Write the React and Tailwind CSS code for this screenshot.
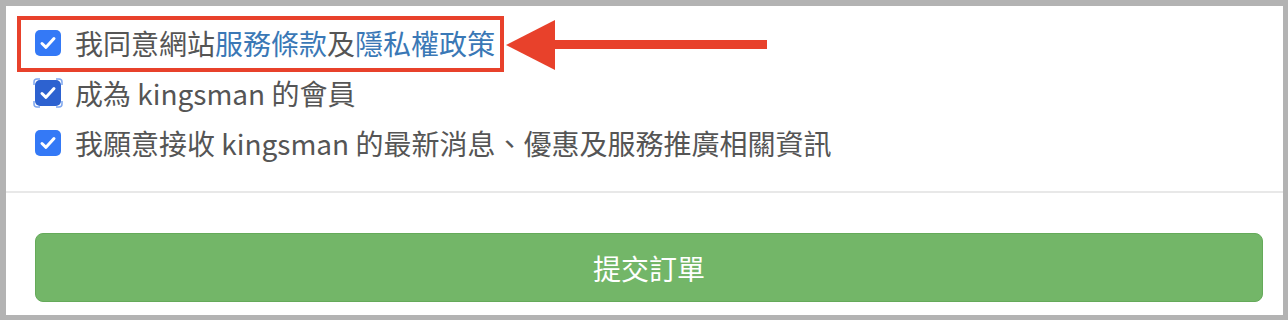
import React from 'react';

const font = { fontFamily: '"Noto Sans CJK TC", "Noto Sans", sans-serif' };

function Check({ focused }) {
    return (
        <span className={`relative flex items-center justify-center w-[26px] h-[26px] rounded-[5px] shrink-0 ${focused ? 'bg-[#2d62d0]' : 'bg-[#3479f6]'}`}>
            {focused && (
                <svg className="absolute -left-[2px] -top-[2px]" width="30" height="30" viewBox="0 0 30 30" fill="none">
                    <path d="M1 7 V4 Q1 1 4 1 H7 M23 1 H26 Q29 1 29 4 V7 M29 23 V26 Q29 29 26 29 H23 M7 29 H4 Q1 29 1 26 V23" stroke="#7ea6ee" strokeWidth="1.5" />
                </svg>
            )}
            <svg width="20" height="20" viewBox="0 0 20 20" fill="none">
                <path d="M4 10.5 L8 14.3 L16 5.5" stroke="white" strokeWidth="3" strokeLinecap="round" strokeLinejoin="round" />
            </svg>
        </span>
    );
}

function Row({ children, focused }) {
    return (
        <div className="h-[50px] flex items-center gap-[14px]">
            <Check focused={focused} />
            <span className="text-[28px] leading-none text-[#555555]">{children}</span>
        </div>
    );
}

export default function App() {
    return (
        <div className="relative w-[1288px] h-[320px] bg-[#b3b3b3] pt-[6px] pl-[6px] pr-[5px] pb-[5px]" style={font}>
            <div className="h-full bg-white flex flex-col">
                <div className="pt-[12px] pb-[23px] pl-[29px]">
                    <Row>
                        我同意網站<span className="text-[#3a78b6]">服務條款</span>及<span className="text-[#3a78b6]">隱私權政策</span>
                    </Row>
                    <Row focused>成為 kingsman 的會員</Row>
                    <Row>我願意接收 kingsman 的最新消息、優惠及服務推廣相關資訊</Row>
                </div>
                <div className="h-[2px] bg-[#e8e8e8]" />
                <div className="pt-[40px] pl-[29px] pr-[20px]">
                    <button className="w-full h-[69px] rounded-[8px] bg-[#73b668] border border-[#65aa5a] text-white text-[28px] leading-none flex items-center justify-center">
                        提交訂單
                    </button>
                </div>
            </div>

            {/* annotation */}
            <div className="absolute left-[17px] top-[16px] w-[487px] h-[56px] border-4 border-[#e8412b]" />
            <svg className="absolute left-[500px] top-[14px]" width="280" height="62" viewBox="0 0 280 62">
                <polygon points="6,31 55,6 55,56" fill="#e8412b" />
                <rect x="54" y="26" width="213" height="9" fill="#e8412b" />
            </svg>
        </div>
    );
}
